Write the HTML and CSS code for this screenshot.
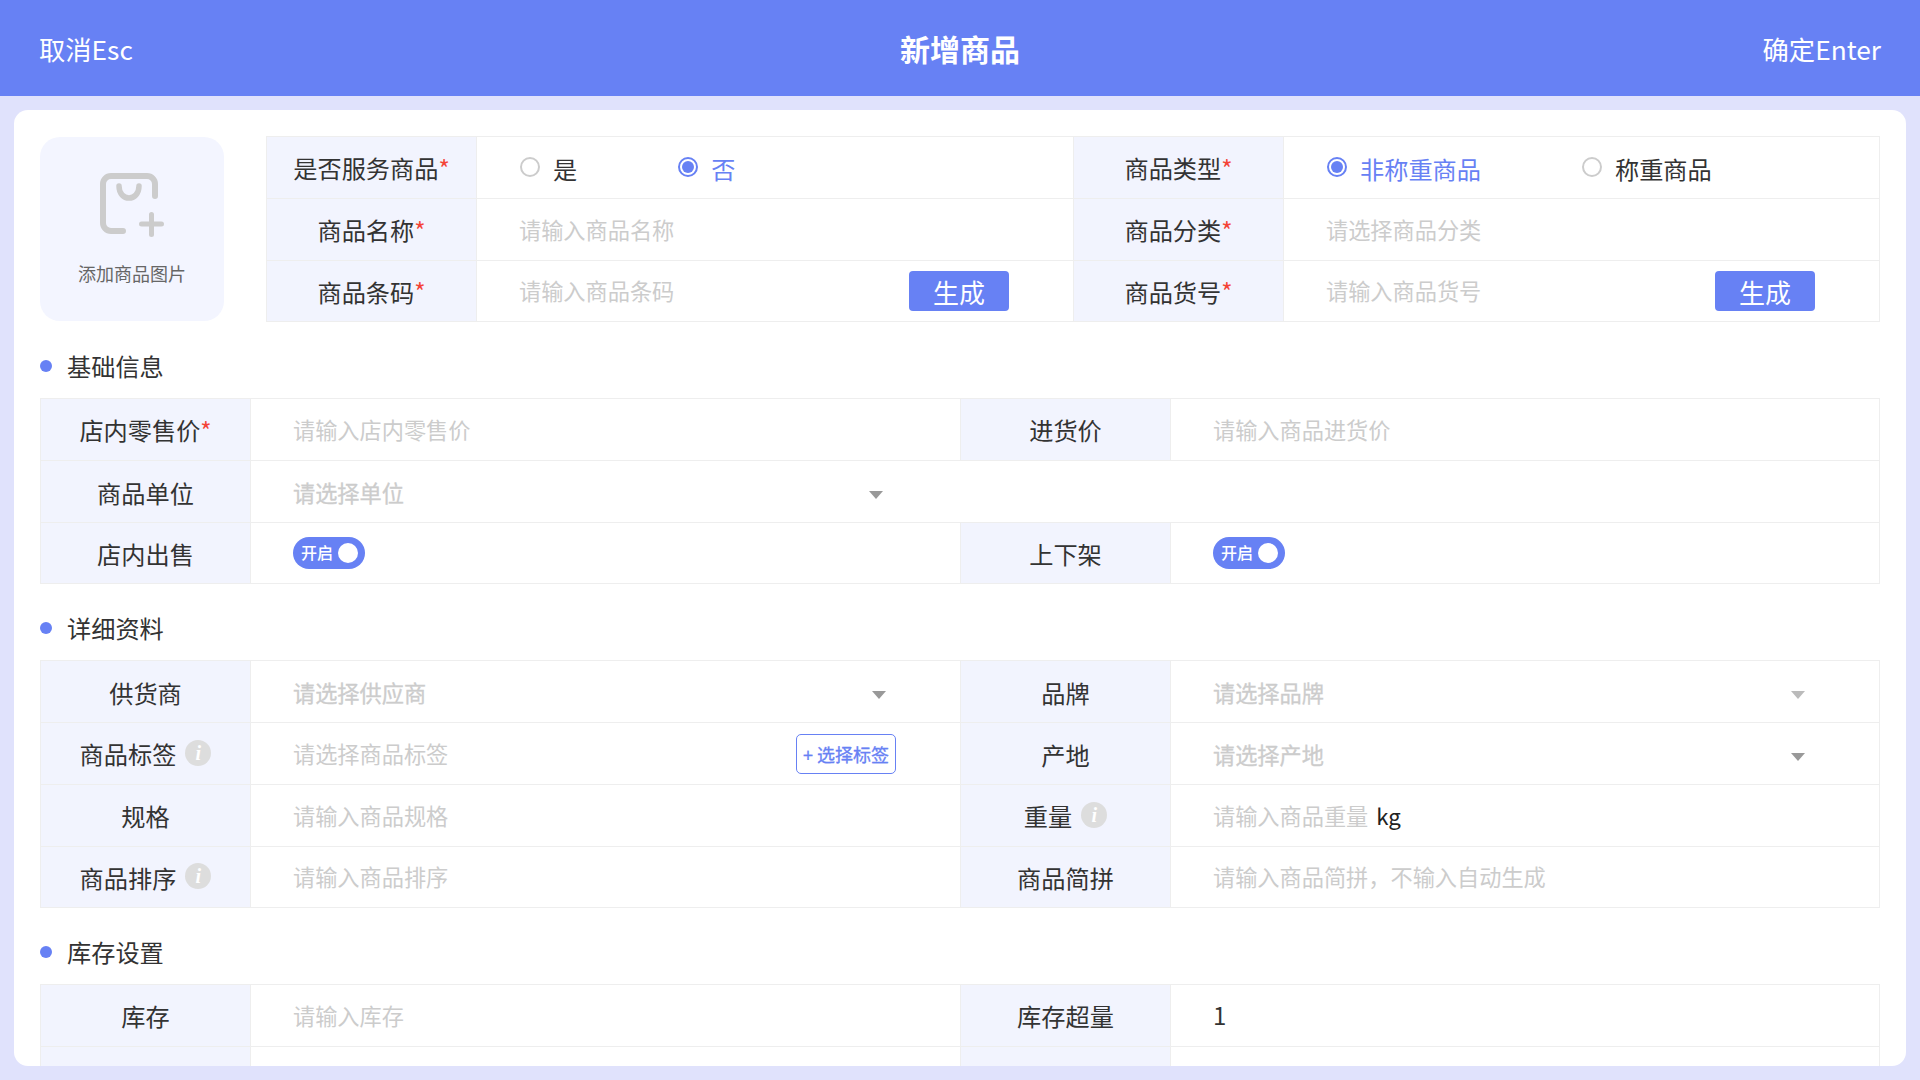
FILE: index.html
```html
<!DOCTYPE html>
<html lang="zh-CN">
<head>
    <meta charset="UTF-8">
    <meta name="viewport" content="width=device-width, initial-scale=1.0">
    <title>新增商品</title>
    <link rel="stylesheet" href="styles.css">
</head>
<body>
    <header class="topbar">
        <span class="topbar-action">取消Esc</span>
        <h1 class="topbar-title">新增商品</h1>
        <span class="topbar-action topbar-right">确定Enter</span>
    </header>

    <main class="page">
        <div class="card">
            <div class="top-area">
                <div class="image-box">
                    <svg class="image-icon" width="64" height="66" viewBox="0 0 64 66" fill="none" stroke="#ccc" stroke-linecap="round" stroke-linejoin="round">
                        <path d="M23 58H11a8 8 0 0 1-8-8V11a8 8 0 0 1 8-8h36a8 8 0 0 1 8 8v12" stroke-width="6"/>
                        <path d="M19 13c0 16 20 16 20 0" stroke-width="5.5"/>
                        <path d="M41.500 51h20M51.500 41.500v20" stroke-width="5"/>
                    </svg>
                    <span class="image-text">添加商品图片</span>
                </div>
                <div class="form-table">
                    <div class="row">
                        <div class="half">
                            <div class="label">是否服务商品<i class="star">*</i></div>
                            <div class="field radio-field">
                                <span class="radio"></span><span class="radio-text">是</span>
                                <span class="radio on"></span><span class="radio-text on-text">否</span>
                            </div>
                        </div>
                        <div class="half">
                            <div class="label">商品类型<i class="star">*</i></div>
                            <div class="field radio-field">
                                <span class="radio on"></span><span class="radio-text on-text">非称重商品</span>
                                <span class="radio"></span><span class="radio-text">称重商品</span>
                            </div>
                        </div>
                    </div>
                    <div class="row">
                        <div class="half">
                            <div class="label">商品名称<i class="star">*</i></div>
                            <div class="field"><span class="hint">请输入商品名称</span></div>
                        </div>
                        <div class="half">
                            <div class="label">商品分类<i class="star">*</i></div>
                            <div class="field"><span class="hint">请选择商品分类</span></div>
                        </div>
                    </div>
                    <div class="row">
                        <div class="half">
                            <div class="label">商品条码<i class="star">*</i></div>
                            <div class="field">
                                <span class="hint">请输入商品条码</span>
                                <button class="gen-btn">生成</button>
                            </div>
                        </div>
                        <div class="half">
                            <div class="label">商品货号<i class="star">*</i></div>
                            <div class="field">
                                <span class="hint">请输入商品货号</span>
                                <button class="gen-btn">生成</button>
                            </div>
                        </div>
                    </div>
                </div>
            </div>

            <div class="section-title">基础信息</div>
            <div class="form-table">
                <div class="row">
                    <div class="half">
                        <div class="label">店内零售价<i class="star">*</i></div>
                        <div class="field"><span class="hint">请输入店内零售价</span></div>
                    </div>
                    <div class="half">
                        <div class="label">进货价</div>
                        <div class="field"><span class="hint">请输入商品进货价</span></div>
                    </div>
                </div>
                <div class="row">
                    <div class="half half-select">
                        <div class="label">商品单位</div>
                        <div class="field"><span class="hint">请选择单位</span><span class="arrow arrow-unit"></span></div>
                    </div>
                    <div class="half"></div>
                </div>
                <div class="row">
                    <div class="half">
                        <div class="label">店内出售</div>
                        <div class="field"><span class="toggle"><span class="toggle-text">开启</span><span class="toggle-knob"></span></span></div>
                    </div>
                    <div class="half">
                        <div class="label">上下架</div>
                        <div class="field"><span class="toggle"><span class="toggle-text">开启</span><span class="toggle-knob"></span></span></div>
                    </div>
                </div>
            </div>

            <div class="section-title">详细资料</div>
            <div class="form-table">
                <div class="row">
                    <div class="half half-select">
                        <div class="label">供货商</div>
                        <div class="field"><span class="hint">请选择供应商</span><span class="arrow"></span></div>
                    </div>
                    <div class="half half-select">
                        <div class="label">品牌</div>
                        <div class="field"><span class="hint">请选择品牌</span><span class="arrow arrow-light"></span></div>
                    </div>
                </div>
                <div class="row">
                    <div class="half">
                        <div class="label">商品标签<i class="info">i</i></div>
                        <div class="field">
                            <span class="hint">请选择商品标签</span>
                            <button class="tag-btn">+ 选择标签</button>
                        </div>
                    </div>
                    <div class="half half-select">
                        <div class="label">产地</div>
                        <div class="field"><span class="hint">请选择产地</span><span class="arrow"></span></div>
                    </div>
                </div>
                <div class="row">
                    <div class="half">
                        <div class="label">规格</div>
                        <div class="field"><span class="hint">请输入商品规格</span></div>
                    </div>
                    <div class="half">
                        <div class="label">重量<i class="info">i</i></div>
                        <div class="field"><span class="hint">请输入商品重量</span><span class="unit">kg</span></div>
                    </div>
                </div>
                <div class="row">
                    <div class="half">
                        <div class="label">商品排序<i class="info">i</i></div>
                        <div class="field"><span class="hint">请输入商品排序</span></div>
                    </div>
                    <div class="half">
                        <div class="label">商品简拼</div>
                        <div class="field"><span class="hint">请输入商品简拼，不输入自动生成</span></div>
                    </div>
                </div>
            </div>

            <div class="section-title">库存设置</div>
            <div class="form-table">
                <div class="row">
                    <div class="half">
                        <div class="label">库存</div>
                        <div class="field"><span class="hint">请输入库存</span></div>
                    </div>
                    <div class="half">
                        <div class="label">库存超量</div>
                        <div class="field"><span class="value">1</span></div>
                    </div>
                </div>
                <div class="row">
                    <div class="half"><div class="label"></div><div class="field"></div></div>
                    <div class="half"><div class="label"></div><div class="field"></div></div>
                </div>
            </div>
        </div>
    </main>
</body>
</html>
```

FILE: styles.css
```css
* {
    box-sizing: border-box;
}
html, body {
    height: 100%;
}
body {
    margin: 0;
    display: flex;
    flex-direction: column;
    overflow: hidden;
    font-family: "Noto Sans CJK SC", "Noto Sans", sans-serif;
    color: #333;
    background-color: #e0e2fc;
}

/* top bar */
.topbar {
    flex: none;
    height: 96px;
    padding: 0 39px;
    display: grid;
    grid-template-columns: 1fr auto 1fr;
    align-items: center;
    background-color: #6781f4;
    color: #fff;
}
.topbar-action {
    font-size: 26.3px;
}
.topbar-right {
    text-align: right;
}
.topbar-title {
    margin: 0;
    font-size: 30px;
    font-weight: 700;
}

/* white card */
.page {
    flex: 1;
    min-height: 0;
    padding: 14px;
}
.card {
    height: 100%;
    padding: 26px 26px 0;
    overflow: hidden;
    background: #fff;
    border-radius: 14px;
}
.top-area {
    display: flex;
    gap: 42px;
}

/* image upload */
.image-box {
    flex: none;
    width: 184px;
    height: 184px;
    margin-top: 1px;
    padding-top: 36px;
    display: flex;
    flex-direction: column;
    align-items: center;
    background-color: #f3f5ff;
    border-radius: 20px;
}
.image-icon {
    display: block;
    flex: none;
}
.image-text {
    margin-top: 21px;
    font-size: 18px;
    line-height: 26px;
    color: #666;
}

/* form tables */
.form-table {
    flex: 1;
    border: 1px solid #eee;
    border-bottom: 0;
}
.row {
    height: 62px;
    display: flex;
    border-bottom: 1px solid #eee;
}
.row:last-child {
    height: 61px;
}
.half {
    flex: 1 1 50%;
    min-width: 0;
    display: flex;
}
.label {
    flex: none;
    width: 210px;
    display: flex;
    align-items: center;
    justify-content: center;
    font-size: 24.2px;
    color: #333;
    background-color: #f2f4fe;
    border-right: 1px solid #eee;
}
.half + .half .label {
    width: 211px;
    border-left: 1px solid #eee;
}
.field {
    flex: 1;
    min-width: 0;
    padding: 0 64px 0 42px;
    display: flex;
    align-items: center;
}
.radio-field {
    padding-left: 43px;
}
.star {
    margin-top: -1px;
    font-style: normal;
    color: #f44336;
}
.info {
    width: 26px;
    height: 26px;
    margin: -2px 0 0 9px;
    font-family: "Liberation Serif", serif;
    font-size: 20px;
    font-style: italic;
    font-weight: 700;
    line-height: 26px;
    text-align: center;
    color: #fff;
    background-color: #ddd;
    border-radius: 50%;
}
.hint {
    margin-top: -2px;
    font-size: 22.2px;
    color: #ccc;
}
.unit {
    margin: -2px 0 0 8px;
    font-size: 22.2px;
    color: #222;
}
.value {
    margin-top: -3px;
    font-size: 24px;
    color: #333;
}

/* select rows sit a little lower than the inputs */
.half-select .label {
    padding-top: 2px;
}
.half-select .hint {
    margin-top: 1px;
    -webkit-text-stroke: 0.3px #ccc;
}
.half-select .arrow {
    margin-top: 6px;
}

/* radios */
.radio {
    flex: none;
    width: 20px;
    height: 20px;
    margin-top: -1px;
    display: flex;
    align-items: center;
    justify-content: center;
    border: 2px solid #ccc;
    border-radius: 50%;
}
.radio.on {
    border-color: #6781f4;
}
.radio.on::after {
    content: "";
    width: 12px;
    height: 12px;
    background-color: #6781f4;
    border-radius: 50%;
}
.radio-text {
    margin: 2px 101px 0 13px;
    font-size: 24.2px;
}
.on-text {
    color: #6781f4;
}

/* buttons */
.gen-btn {
    width: 100px;
    height: 40px;
    margin-left: auto;
    padding: 2px 0 0;
    font-family: inherit;
    font-size: 26px;
    line-height: 38px;
    color: #fff;
    background-color: #6781f4;
    border: 0;
    border-radius: 4px;
}
.tag-btn {
    width: 100px;
    height: 40px;
    margin-left: auto;
    padding: 0;
    font-family: inherit;
    font-size: 18px;
    color: #6781f4;
    -webkit-text-stroke: 0.3px #6781f4;
    background: #fff;
    border: 1px solid #6781f4;
    border-radius: 5px;
}

/* select arrow */
.arrow {
    margin: 2px 10px 0 auto;
    border-top: 8px solid #999;
    border-left: 7.5px solid transparent;
    border-right: 7.5px solid transparent;
}
.arrow-unit {
    margin-right: 13px;
}
.arrow-light {
    border-top-color: #bbb;
}

/* toggle */
.toggle {
    width: 72px;
    height: 32px;
    padding: 0 7px 0 8px;
    margin-top: -1px;
    display: flex;
    align-items: center;
    justify-content: space-between;
    background-color: #6781f4;
    border-radius: 16px;
}
.toggle-text {
    margin-top: -1px;
    font-size: 16px;
    font-weight: 500;
    color: #fff;
}
.toggle-knob {
    width: 20px;
    height: 20px;
    background: #fff;
    border-radius: 50%;
}

/* section heading */
.section-title {
    height: 76px;
    padding: 10px 0 0 27px;
    display: flex;
    align-items: center;
    position: relative;
    font-size: 24.2px;
    color: #333;
}
.section-title::before {
    content: "";
    position: absolute;
    left: 0;
    top: 38px;
    width: 12px;
    height: 12px;
    background-color: #6781f4;
    border-radius: 50%;
}
```
